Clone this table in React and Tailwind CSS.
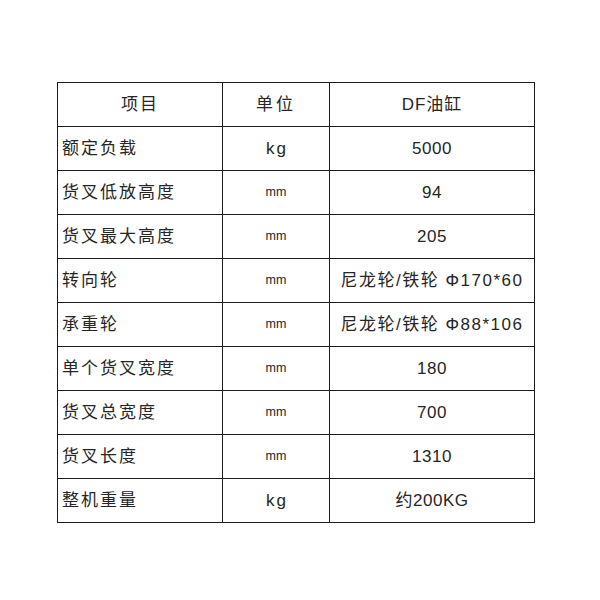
export default function App() {
  const rows = [
    ["额定负载", "kg", "5000"],
    ["货叉低放高度", "mm", "94"],
    ["货叉最大高度", "mm", "205"],
    ["转向轮", "mm", "尼龙轮/铁轮 Φ170*60"],
    ["承重轮", "mm", "尼龙轮/铁轮 Φ88*106"],
    ["单个货叉宽度", "mm", "180"],
    ["货叉总宽度", "mm", "700"],
    ["货叉长度", "mm", "1310"],
    ["整机重量", "kg", "约200KG"],
  ];
  const font = { fontFamily: '"Liberation Sans", "Noto Sans CJK SC", sans-serif' };
  return (
    <div className="w-[600px] h-[600px] bg-white pt-[82px] pl-[57px]" style={font}>
      <div className="grid grid-cols-[165px_107px_205px] w-[478px] border-l border-t border-[#1c1c1c] text-[#262626]">
        <div className="h-[44px] border-r border-b border-[#1c1c1c] flex items-center justify-center text-[17px] tracking-[2px]">项目</div>
        <div className="h-[44px] border-r border-b border-[#1c1c1c] flex items-center justify-center text-[17px] tracking-[3px]">单位</div>
        <div className="h-[44px] border-r border-b border-[#1c1c1c] flex items-center justify-center text-[17px] tracking-[1px]">DF油缸</div>
        {rows.map((r, i) => (
          <div key={i} className="contents">
            <div className="h-[44px] border-r border-b border-[#1c1c1c] flex items-center pl-[4px] text-[17px] tracking-[2px]">{r[0]}</div>
            <div className="h-[44px] border-r border-b border-[#1c1c1c] flex items-center justify-center">
              {r[1] === "kg" ? (
                <span className="text-[17px] tracking-[2px] pl-[2px]">kg</span>
              ) : (
                <span className="text-[12.5px]">mm</span>
              )}
            </div>
            <div
              className={
                r[2].length > 10
                  ? "h-[44px] border-r border-b border-[#1c1c1c] flex items-center justify-center text-[17px] tracking-[1.5px] whitespace-nowrap"
                  : "h-[44px] border-r border-b border-[#1c1c1c] flex items-center justify-center text-[17px] tracking-[0.5px] whitespace-nowrap"
              }
            >
              {r[2]}
            </div>
          </div>
        ))}
      </div>
    </div>
  );
}
